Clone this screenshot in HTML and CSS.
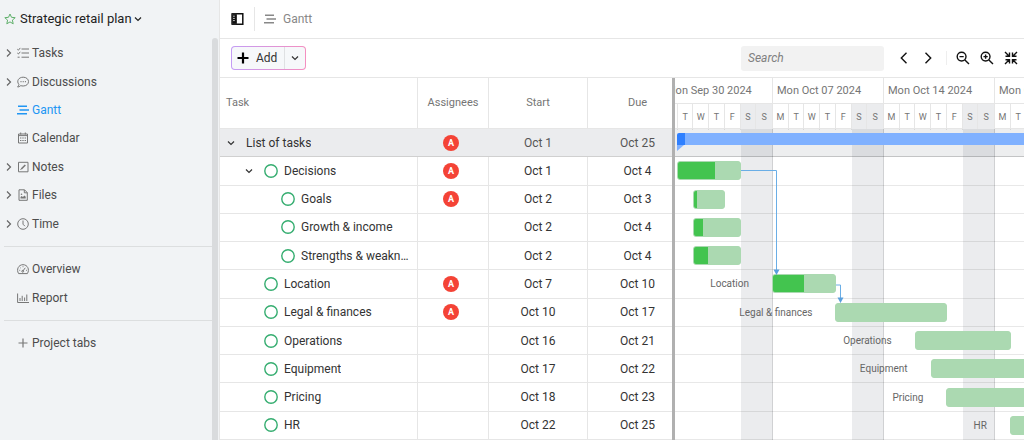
FILE: index.html
```html
<!DOCTYPE html>
<html lang="en">
<head>
<meta charset="utf-8">
<title>Strategic retail plan – Gantt</title>
<link rel="stylesheet" href="styles.css">
</head>
<body>
<svg class="sprite" aria-hidden="true">
  <symbol id="chev-right" viewBox="0 0 10 10"><path d="M3 1.5 6.5 5 3 8.5"/></symbol>
  <symbol id="chev-down" viewBox="0 0 10 10"><path d="M2 3.5 5 6.5 8 3.5"/></symbol>
  <symbol id="gantt-icon" viewBox="0 0 12 12"><path d="M1 2.3h9M2.5 6h9.5M0 9.8h10" stroke-width="1.4"/></symbol>
  <symbol id="ring" viewBox="0 0 14 14"><circle cx="7" cy="7" r="6.2"/></symbol>
</svg>
<div class="app">
  <aside class="sidebar">
    <button class="project" type="button">
      <svg class="star" viewBox="0 0 12 12"><path d="M6 1 7.5 4.3 11.2 4.7 8.4 7.1 9.2 10.8 6 8.9 2.8 10.8 3.6 7.1.8 4.7 4.5 4.3Z"/></svg>
      <span>Strategic retail plan</span>
      <svg class="chev"><use href="#chev-down"/></svg>
    </button>
    <div class="side-scroll">
      <nav class="side-nav">
        <ul class="group">
          <li><a href="#tasks"><svg class="chev"><use href="#chev-right"/></svg><svg class="icon" viewBox="0 0 12 12"><path d="M.3 2.2 1.4 3.2 3.3.9M.3 6 1.4 7 3.3 4.8M.6 10.2h2M4.5 2H12M4.5 6H12M4.5 10.2H12"/></svg>Tasks</a></li>
          <li><a href="#discussions"><svg class="chev"><use href="#chev-right"/></svg><svg class="icon" viewBox="0 0 12 12"><path d="M1.9 8.4C-.8 5.2 1.6 1.2 6.2 1.2c3.2 0 5.3 2 5.3 4.4s-2.1 4.4-5.3 4.4c-.9 0-1.7-.1-2.4-.4C2.7 10.6 1.5 11 .6 11c.7-.7 1.2-1.6 1.3-2.6Z"/><path d="M3.5 5.6h1M5.7 5.6h1M7.9 5.6h1" stroke-width="1.2"/></svg>Discussions</a></li>
          <li><a href="#gantt" class="active" aria-current="page"><svg class="icon"><use href="#gantt-icon"/></svg>Gantt</a></li>
          <li><a href="#calendar"><svg class="icon" viewBox="0 0 12 12"><path d="M1.5 2h9v9h-9ZM1.5 3.6h9M3.7.5v2M8.3.5v2"/><path d="M3 6h1.4M5.3 6h1.4M7.6 6H9M3 8.5h1.4M5.3 8.5h1.4M7.6 8.5H9" stroke-width="1.2"/></svg>Calendar</a></li>
          <li><a href="#notes"><svg class="chev"><use href="#chev-right"/></svg><svg class="icon" viewBox="0 0 12 12"><path d="M1.5 1.3h9.5v9.5H1.5Z"/><path d="M4.3 8 8.3 4" stroke-width="1.6"/><path d="M3.5 8.8l.8-.8"/></svg>Notes</a></li>
          <li><a href="#files"><svg class="chev"><use href="#chev-right"/></svg><svg class="icon" viewBox="0 0 12 12"><path d="M2 .8h5.5L10.3 3.6v7.7H2ZM7.3.8v3h3"/><path d="M3.5 9.5v-1.5l1.2-1 1.2 1 1.6-1.5 1.2 1.2v1.8Z" fill="currentColor" stroke="none"/><circle cx="4.5" cy="5.2" r=".8" fill="currentColor" stroke="none"/></svg>Files</a></li>
          <li><a href="#time"><svg class="chev"><use href="#chev-right"/></svg><svg class="icon" viewBox="0 0 12 12"><circle cx="6" cy="6" r="5.3"/><path d="M6 2.5V6.2L7.9 8.2"/></svg>Time</a></li>
        </ul>
        <ul class="group">
          <li><a href="#overview"><svg class="icon" viewBox="0 0 12 12"><path d="M1.6 10.6C-.9 6.5 1.5 1.7 6 1.7s6.9 4.8 4.4 8.9Z"/><path d="M5.7 8.2 8.3 4.8M2.3 7.3h.9M3.2 4.6l.6.6M6 3.3v.9M9 7.3h.9"/><circle cx="5.7" cy="8.3" r=".9"/></svg>Overview</a></li>
          <li><a href="#report"><svg class="icon" viewBox="0 0 12 12"><path d="M.6 1.5v9H12M3 6v3M5.2 3.8V9M7.6 5.5V9M9.8 2.5V9"/></svg>Report</a></li>
        </ul>
        <ul class="group">
          <li><a href="#tabs"><svg class="icon" viewBox="0 0 12 12"><path d="M6 1.5v9M1.5 6h9" stroke-width="1.2"/></svg>Project tabs</a></li>
        </ul>
      </nav>
      <div class="scrollbar"></div>
    </div>
  </aside>

  <main class="main">
    <header class="topbar">
      <button class="toggle" type="button" aria-label="Toggle sidebar"><svg viewBox="0 0 13 12"><path d="M1.2.8h10.6v10.4H1.2Z" fill="none" stroke="#111" stroke-width="1.5"/><path d="M1 1h4.5v10H1Z" fill="#111"/><path d="M2.2 3.2h1.5M2.2 5.4h1.5M2.2 7.6h1.5" stroke="#fff" stroke-width=".9"/></svg></button>
      <h1 class="view-title"><svg class="icon"><use href="#gantt-icon"/></svg>Gantt</h1>
    </header>

    <div class="toolbar">
      <div class="add">
        <button class="add-main" type="button"><svg class="plus" viewBox="0 0 12 12"><path d="M6 .5v11M.5 6h11" stroke-width="2.2"/></svg>Add</button>
        <button class="add-more" type="button" aria-label="More add options"><svg class="chev"><use href="#chev-down"/></svg></button>
      </div>
      <div class="tools">
        <input class="search" type="search" placeholder="Search" aria-label="Search">
        <div class="tool-set">
          <button type="button" aria-label="Previous"><svg viewBox="0 0 14 14"><path d="M9.5 1.8 4.3 7l5.2 5.2"/></svg></button>
          <button type="button" aria-label="Next"><svg viewBox="0 0 14 14"><path d="M4.5 1.8 9.7 7l-5.2 5.2"/></svg></button>
        </div>
        <div class="tool-set zooms">
          <button type="button" aria-label="Zoom out"><svg viewBox="0 0 14 14"><circle cx="5.6" cy="5.6" r="4.4"/><path d="M8.9 8.9 13 13M3.5 5.6h4.2"/></svg></button>
          <button type="button" aria-label="Zoom in"><svg viewBox="0 0 14 14"><circle cx="5.6" cy="5.6" r="4.4"/><path d="M8.9 8.9 13 13M3.5 5.6h4.2M5.6 3.5v4.2"/></svg></button>
          <button type="button" aria-label="Fit to screen"><svg viewBox="0 0 14 14"><path d="M1 1 5 5M13 1 9 5M1 13 5 9M13 13 9 9M1.5 5.3h4V1.5M12.5 5.3h-4V1.5M1.5 8.7h4v3.8M12.5 8.7h-4v3.8"/></svg></button>
        </div>
      </div>
    </div>

    <div class="gantt">
      <div class="grid-pane">
        <table class="tasks">
          <thead>
            <tr><th scope="col" class="name">Task</th><th scope="col">Assignees</th><th scope="col">Start</th><th scope="col">Due</th></tr>
          </thead>
          <tbody>
            <tr class="list"><td class="name"><svg class="chev"><use href="#chev-down"/></svg><span>List of tasks</span></td><td><span class="avatar">A</span></td><td>Oct 1</td><td>Oct 25</td></tr>
            <tr><td class="name level-1"><svg class="chev"><use href="#chev-down"/></svg><svg class="status"><use href="#ring"/></svg><span>Decisions</span></td><td><span class="avatar">A</span></td><td>Oct 1</td><td>Oct 4</td></tr>
            <tr><td class="name level-2"><svg class="status"><use href="#ring"/></svg><span>Goals</span></td><td><span class="avatar">A</span></td><td>Oct 2</td><td>Oct 3</td></tr>
            <tr><td class="name level-2"><svg class="status"><use href="#ring"/></svg><span>Growth &amp; income</span></td><td></td><td>Oct 2</td><td>Oct 4</td></tr>
            <tr><td class="name level-2"><svg class="status"><use href="#ring"/></svg><span>Strengths &amp; weakn…</span></td><td></td><td>Oct 2</td><td>Oct 4</td></tr>
            <tr><td class="name leaf"><svg class="status"><use href="#ring"/></svg><span>Location</span></td><td><span class="avatar">A</span></td><td>Oct 7</td><td>Oct 10</td></tr>
            <tr><td class="name leaf"><svg class="status"><use href="#ring"/></svg><span>Legal &amp; finances</span></td><td><span class="avatar">A</span></td><td>Oct 10</td><td>Oct 17</td></tr>
            <tr><td class="name leaf"><svg class="status"><use href="#ring"/></svg><span>Operations</span></td><td></td><td>Oct 16</td><td>Oct 21</td></tr>
            <tr><td class="name leaf"><svg class="status"><use href="#ring"/></svg><span>Equipment</span></td><td></td><td>Oct 17</td><td>Oct 22</td></tr>
            <tr><td class="name leaf"><svg class="status"><use href="#ring"/></svg><span>Pricing</span></td><td></td><td>Oct 18</td><td>Oct 23</td></tr>
            <tr><td class="name leaf"><svg class="status"><use href="#ring"/></svg><span>HR</span></td><td></td><td>Oct 22</td><td>Oct 25</td></tr>
          </tbody>
        </table>
      </div>

      <div class="chart-pane">
        <div class="canvas">
          <div class="scale">
            <div class="week"><div class="week-name">Mon Sep 30 2024</div><div class="days"><span>M</span><span>T</span><span>W</span><span>T</span><span>F</span><span>S</span><span>S</span></div></div>
            <div class="week"><div class="week-name">Mon Oct 07 2024</div><div class="days"><span>M</span><span>T</span><span>W</span><span>T</span><span>F</span><span>S</span><span>S</span></div></div>
            <div class="week"><div class="week-name">Mon Oct 14 2024</div><div class="days"><span>M</span><span>T</span><span>W</span><span>T</span><span>F</span><span>S</span><span>S</span></div></div>
            <div class="week"><div class="week-name">Mon Oct 21 2024</div><div class="days"><span>M</span><span>T</span><span>W</span><span>T</span><span>F</span><span>S</span><span>S</span></div></div>
          </div>
          <div class="plot">
            <div class="row list"><div class="summary" style="grid-column: 2 / 27"></div></div>
            <div class="row"><div class="bar" style="grid-column: 2 / 6"><div class="done" style="width: 60%"></div></div></div>
            <div class="row"><div class="bar" style="grid-column: 3 / 5"><div class="done" style="width: 10%"></div></div></div>
            <div class="row"><div class="bar" style="grid-column: 3 / 6"><div class="done" style="width: 20%"></div></div></div>
            <div class="row"><div class="bar" style="grid-column: 3 / 6"><div class="done" style="width: 30%"></div></div></div>
            <div class="row"><div class="bar" style="grid-column: 8 / 12"><span class="label">Location</span><div class="done" style="width: 50%"></div></div></div>
            <div class="row"><div class="bar" style="grid-column: 12 / 19"><span class="label">Legal &amp; finances</span></div></div>
            <div class="row"><div class="bar" style="grid-column: 17 / 23"><span class="label">Operations</span></div></div>
            <div class="row"><div class="bar" style="grid-column: 18 / 24"><span class="label">Equipment</span></div></div>
            <div class="row"><div class="bar" style="grid-column: 19 / 25"><span class="label">Pricing</span></div></div>
            <div class="row"><div class="bar" style="grid-column: 23 / 27"><span class="label">HR</span></div></div>
            <svg class="links" viewBox="0 0 444 311" preserveAspectRatio="none" aria-hidden="true">
              <path d="M79 41.5H114.500V142M174 156H178.500V170"/>
              <path class="head" d="M111.500 140.500h6l-3 5.500ZM175.500 168.500h6l-3 5.500Z"/>
            </svg>
          </div>
        </div>
      </div>
    </div>
  </main>
</div>
</body>
</html>
```
FILE: styles.css
```css
* { box-sizing: border-box; }
body {
  margin: 0;
  font: 12px/16px Roboto, "Liberation Sans", sans-serif;
  color: #333;
  background: #fff;
}
button { font: inherit; color: inherit; background: none; border: 0; padding: 0; }
ul { list-style: none; margin: 0; padding: 0; }
svg { fill: none; stroke: currentColor; stroke-width: 1; flex: none; }
.sprite { position: absolute; width: 0; height: 0; }
.chev { width: 10px; height: 10px; stroke-width: 1.2; }
.icon { width: 12px; height: 12px; }

.app { display: flex; min-height: 100vh; }

/* Sidebar */
.sidebar {
  flex: 0 0 219px;
  display: flex;
  flex-direction: column;
  background: #f1f3f5;
}
.project {
  display: flex;
  align-items: center;
  height: 38px;
  padding-left: 4px;
  font-size: 13px;
  color: #222;
}
.star { width: 12px; height: 12px; margin-right: 4px; color: #5fb06a; }
.project .chev { margin-left: 1px; }
.side-scroll { flex: 1; display: flex; }
.side-nav { flex: 1; padding: 1px 0 0 4px; }
.scrollbar { width: 6px; margin-right: 1px; background: #d9dbdd; border-radius: 3px 3px 0 0; }
.group { display: grid; grid-auto-rows: 1fr; }
.group:first-child { min-height: 199px; }
.group:nth-child(2) { min-height: 57px; }
.group + .group {
  margin-top: 8px;
  border-top: 1px solid #dcdedf;
  padding-top: 8px;
  box-sizing: content-box;
}
.group a {
  display: flex;
  align-items: center;
  height: 100%;
  min-height: 28px;
  padding-left: 13px;
  font-size: 12px;
  color: #4c4c4c;
  text-decoration: none;
}
.group a .icon { margin-right: 3px; color: #777; }
.group a .chev { width: 10px; margin-left: -13px; margin-right: 3px; color: #666; }
.group a.active, .group a.active .icon { color: #2196f3; }

/* Header and toolbar */
.main { flex: 1; min-width: 0; display: flex; flex-direction: column; border-left: 1px solid #e6e6e6; }
.topbar {
  display: flex;
  align-items: center;
  height: 39px;
  padding-left: 11px;
  border-bottom: 1px solid #e6e6e6;
}
.toggle { display: flex; padding-right: 10px; }
.toggle svg { width: 13px; height: 12px; }
.view-title {
  display: flex;
  align-items: center;
  gap: 7px;
  height: 24px;
  margin: 0;
  padding-left: 9px;
  border-left: 1px solid #e6e6e6;
  font-size: 12px;
  font-weight: 400;
  color: #888;
}
.toolbar {
  display: flex;
  align-items: center;
  justify-content: space-between;
  height: 39px;
  padding: 0 6px 0 11px;
  border-bottom: 1px solid #e6e6e6;
}
.add {
  display: flex;
  height: 24px;
  border: 1px solid transparent;
  border-radius: 4px;
  background:
    linear-gradient(#f6f8fa, #f6f8fa) padding-box,
    linear-gradient(90deg, #c39cf5, #f48fc0) border-box;
}
.add-main { display: flex; align-items: center; gap: 7px; padding: 0 7px 0 5px; font-size: 12px; }
.add-more { display: flex; align-items: center; padding: 0 5px; border-left: 1px solid #dfe1e3; }
.plus { width: 12px; height: 12px; color: #000; }
.tools { display: flex; align-items: center; }
.search {
  width: 143px;
  height: 25px;
  padding: 0 7px;
  border: 0;
  border-radius: 3px;
  background: #f2f2f2;
  font: italic 12px/16px Roboto, "Liberation Sans", sans-serif;
}
.search::placeholder { color: #808080; opacity: 1; }
.tool-set { display: flex; gap: 10px; margin-left: 13px; }
.tool-set button { display: flex; }
.tool-set svg { width: 14px; height: 14px; stroke-width: 1.4; color: #111; }
.zooms { margin-left: 11px; padding-left: 9px; border-left: 1px solid #eee; }

/* Task table */
.gantt { flex: 1; display: flex; }
.grid-pane { flex: 0 0 455px; overflow: hidden; border-right: 3px solid #b0b0b0; display: flex; }
.tasks {
  display: grid;
  grid-template-rows: 51px repeat(11, minmax(28px, 1fr));
}
.tasks thead, .tasks tbody { display: contents; }
.tasks tr {
  display: grid;
  grid-template-columns: 198px 71px 99px 100px;
  border-bottom: 1px solid #e6e6e6;
}
.tasks th, .tasks td {
  display: flex;
  align-items: center;
  justify-content: center;
  min-width: 0;
  padding: 0;
  border-right: 1px solid #e6e6e6;
}
.tasks th { font-size: 11px; font-weight: 400; color: #757575; }
.tasks .name { justify-content: flex-start; padding: 0 4px 0 6px; }
.tasks .name span { overflow: hidden; text-overflow: ellipsis; white-space: nowrap; }
.tasks .list { background: #ebecee; border-bottom-color: #d0d0d0; color: #555; }
.tasks .list .name { color: #333; }
.tasks .list td { border-color: transparent; }
.list .name .chev { margin-right: 10px; }
.tasks .level-1 { padding-left: 24px; }
.level-1 .chev { margin-right: 10px; }
.tasks .level-2 { padding-left: 61px; }
.tasks .leaf { padding-left: 44px; }
.status { width: 14px; height: 14px; margin-right: 6px; stroke-width: 1.4; color: #35ad70; }
.avatar {
  width: 16px;
  height: 16px;
  margin-right: 4px;
  border-radius: 50%;
  background: #f44336;
  color: #fff;
  font-size: 9px;
  font-weight: 700;
  text-align: center;
}

/* Timeline */
.chart-pane { flex: 1; min-width: 0; overflow: hidden; display: flex; }
.canvas { flex: none; width: 444px; margin-left: -13px; display: flex; flex-direction: column; }
.scale { display: flex; height: 51px; color: #757575; border-bottom: 1px solid #e6e6e6; }
.week { flex: 1; border-right: 1px solid #e6e6e6; }
.week-name { height: 26px; padding-left: 4px; font-size: 11px; line-height: 25px; border-bottom: 1px solid #e6e6e6; white-space: nowrap; }
.days { display: grid; grid-template-columns: repeat(7, 1fr); height: 24px; }
.days span { font-size: 9px; line-height: 26px; text-align: center; border-right: 1px solid #e6e6e6; }
.days span:nth-child(n+6) { background: #ebecee; }
.days span:last-child { border-right: 0; }
.plot {
  position: relative;
  flex: 1;
  display: grid;
  grid-template-rows: repeat(11, minmax(28px, 1fr));
  background: linear-gradient(90deg, transparent 71.4%, #ebecee 71.4% 99%, #d0d1d3 99%) 0 0 / 111px 100%;
}
.row {
  display: grid;
  grid-template-columns: repeat(28, 1fr);
  align-items: center;
  border-bottom: 1px solid #1e1e1e1a;
}
.row.list { background: #1e283414; border-bottom-color: #1e1e1e33; align-items: start; }
.bar { position: relative; height: 19px; margin-left: -1px; border: 1px solid #abd9b1; border-radius: 3px; background: #abd9b1; }
.done { height: 100%; background: #43c44f; border-radius: 2px 0 0 2px; }
.label { position: absolute; right: 100%; margin-right: 24px; font-size: 10px; line-height: 18px; white-space: nowrap; color: #666; }
.summary {
  position: relative;
  height: 12px;
  margin: 4px 0 0 -1px;
  border-radius: 2px 2px 0 0;
  background: linear-gradient(90deg, #2f80ff 8px, #80b1ff 8px);
}
.summary::after {
  content: "";
  position: absolute;
  left: 0;
  top: 100%;
  border-top: 6px solid #80b1ff;
  border-right: 7px solid transparent;
}
.links { position: absolute; inset: 0; width: 100%; height: 100%; stroke: #6aaee6; }
.links .head { fill: #5a9fdc; stroke: none; }
```
